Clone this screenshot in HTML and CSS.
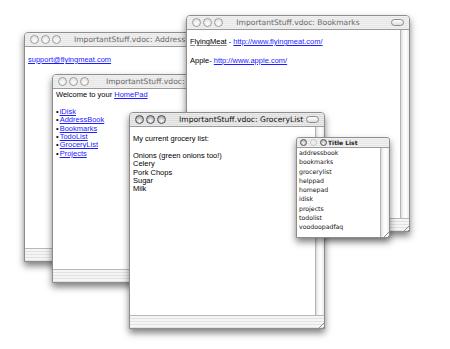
FILE: index.html
```html
<!DOCTYPE html>
<html lang="en">
<head>
  <meta charset="UTF-8">
  <title>VoodooPad windows</title>
  <link rel="stylesheet" href="styles.css">
</head>
<body>

  <div class="desktop">

    <!-- AddressBook page -->
    <div class="window win-addr">
      <div class="titlebar">
        <div class="lights"><span class="light"></span><span class="light"></span><span class="light"></span></div>
        <div class="title">ImportantStuff.vdoc: AddressBook</div>
        <div class="bar-end"></div>
      </div>
      <div class="pane">
        <div class="doc doc-addr">
          <a href="#">support@flyingmeat.com</a>
        </div>
        <div class="scroller"></div>
      </div>
      <div class="statusbar"><span class="grip"></span></div>
    </div>

    <!-- HomePad page -->
    <div class="window win-home">
      <div class="titlebar">
        <div class="lights"><span class="light"></span><span class="light"></span><span class="light"></span></div>
        <div class="title">ImportantStuff.vdoc: HomePad</div>
        <div class="bar-end"></div>
      </div>
      <div class="pane">
        <div class="doc doc-home">
          <p>Welcome to your <a href="#">HomePad</a></p>
          <ul class="pages">
            <li><a href="#">iDisk</a></li>
            <li><a href="#">AddressBook</a></li>
            <li><a href="#">Bookmarks</a></li>
            <li><a href="#">TodoList</a></li>
            <li><a href="#">GroceryList</a></li>
            <li><a href="#">Projects</a></li>
          </ul>
        </div>
        <div class="scroller"></div>
      </div>
      <div class="statusbar"><span class="grip"></span></div>
    </div>

    <!-- Bookmarks page -->
    <div class="window win-bookmarks">
      <div class="titlebar">
        <div class="lights"><span class="light"></span><span class="light"></span><span class="light"></span></div>
        <div class="title">ImportantStuff.vdoc: Bookmarks</div>
        <div class="bar-end"><span class="pill"></span></div>
      </div>
      <div class="pane">
        <div class="doc doc-bookmarks">
          <p><a class="wiki" href="#">FlyingMeat</a> - <a href="#">http://www.flyingmeat.com/</a></p>
          <p>Apple- <a href="#">http://www.apple.com/</a></p>
        </div>
        <div class="scroller"></div>
      </div>
      <div class="statusbar"><span class="grip"></span></div>
    </div>

    <!-- GroceryList page (key window) -->
    <div class="window win-grocery active">
      <div class="titlebar">
        <div class="lights"><span class="light"></span><span class="light"></span><span class="light"></span></div>
        <div class="title">ImportantStuff.vdoc: GroceryList</div>
        <div class="bar-end"><span class="pill"></span></div>
      </div>
      <div class="pane">
        <div class="doc doc-grocery">
          <p>My current grocery list:</p>
          <p>Onions (green onions too!)<br>Celery<br>Pork Chops<br>Sugar<br>Milk</p>
        </div>
        <div class="scroller"></div>
      </div>
      <div class="statusbar"><span class="grip"></span></div>
    </div>

    <!-- Title List panel -->
    <div class="window panel win-titles">
      <div class="titlebar">
        <div class="lights"><span class="light"></span><span class="light dim"></span><span class="light"></span></div>
        <div class="title">Title List</div>
      </div>
      <div class="pane">
        <ul class="title-list">
          <li>addressbook</li>
          <li>bookmarks</li>
          <li>grocerylist</li>
          <li>helppad</li>
          <li>homepad</li>
          <li>idisk</li>
          <li>projects</li>
          <li>todolist</li>
          <li>voodoopadfaq</li>
        </ul>
        <div class="scroller"><span class="grip"></span></div>
      </div>
    </div>

  </div>

</body>
</html>
```

FILE: styles.css
```css
body {
  margin: 0;
  background-color: #fff;
  font-family: "Liberation Sans", Arial, sans-serif;
}
.desktop {
  position: relative;
  width: 450px;
  height: 349px;
  overflow: hidden;
}

/* window frame */
.window {
  position: absolute;
  display: flex;
  flex-direction: column;
  background-color: #fff;
  border: 1px solid #8d8d8d;
  border-radius: 4px 4px 0 0;
  box-shadow: 0 4px 7px rgba(0, 0, 0, 0.5);
}
.win-addr {
  left: 24px;
  top: 32px;
  width: 228px;
  height: 228px;
}
.win-home {
  left: 52px;
  top: 74px;
  width: 223px;
  height: 207px;
}
.win-bookmarks {
  left: 186px;
  top: 15px;
  width: 222px;
  height: 215px;
}
.win-grocery {
  left: 129px;
  top: 112px;
  width: 194px;
  height: 215px;
}
.win-titles {
  left: 296px;
  top: 137px;
  width: 92px;
  height: 99px;
  border-radius: 3px 3px 0 0;
}

/* title bar */
.titlebar {
  display: grid;
  grid-template-columns: 1fr auto 1fr;
  align-items: center;
  height: 13px;
  border-bottom: 1px solid #9a9a9a;
  border-radius: 3px 3px 0 0;
  background: repeating-linear-gradient(#f1f1f1 0 1px, #e6e6e6 1px 2px);
}
.lights {
  display: flex;
  gap: 2px;
  padding-left: 5px;
}
.light {
  width: 7px;
  height: 7px;
  border: 1px solid #9c9c9c;
  border-radius: 50%;
  background: radial-gradient(circle at 50% 70%, #fdfdfd, #dcdcdc);
}
.title {
  font-family: "DejaVu Sans", sans-serif;
  font-size: 7.6px;
  color: #6b6b6b;
  white-space: nowrap;
}
.bar-end {
  display: flex;
  justify-content: flex-end;
  padding-right: 5px;
}
.pill {
  width: 11px;
  height: 5px;
  border: 1px solid #8a8a8a;
  border-radius: 4px;
  background: linear-gradient(#fff, #dedede);
}
.active .titlebar {
  grid-template-columns: auto 1fr auto;
  background: repeating-linear-gradient(#ececec 0 1px, #dcdcdc 1px 2px);
}
.active .light {
  border-color: #505050;
  background: radial-gradient(circle at 50% 70%, #f2f3f6 10%, #9599a2 90%);
}
.active .title {
  color: #111;
  padding-left: 13px;
  overflow: hidden;
}
.active .bar-end {
  padding-left: 2px;
}

/* content */
.pane {
  display: flex;
  flex: 1;
  min-height: 0;
}
.doc {
  flex: 1;
  padding: 0 3px;
  font-size: 7.5px;
  line-height: 8.4px;
  color: #000;
  overflow: hidden;
}
.doc p {
  margin: 0 0 8.4px;
}
.doc a {
  color: #1d1dff;
}
.doc-addr {
  padding-top: 9px;
}
.doc-home {
  padding-top: 2px;
}
.doc-grocery {
  padding-top: 8px;
}
.doc-bookmarks {
  padding-top: 7px;
  line-height: 9.3px;
}
.doc-bookmarks p {
  margin-bottom: 9.3px;
}
.doc a.wiki {
  color: #000;
  text-decoration-color: #888;
}
.pages {
  list-style: none;
  margin: 0;
  padding: 0;
}
.pages li::before {
  content: "\2022";
  margin-right: 1px;
}
.scroller {
  display: flex;
  align-items: flex-end;
  justify-content: flex-end;
  width: 8px;
  border-left: 1px solid #b4b4b4;
  background: linear-gradient(to right, #dcdcdc, #f6f6f6 30%, #fff 60%, #e9e9e9);
}

/* bottom strip */
.statusbar {
  display: flex;
  justify-content: flex-end;
  align-items: flex-end;
  height: 12px;
  border-top: 1px solid #b8b8b8;
  background: repeating-linear-gradient(#f5f5f5 0 2px, #e2e2e2 2px 3px);
}
.grip {
  width: 8px;
  height: 8px;
  background: repeating-linear-gradient(135deg, transparent 0 1.5px, #8c8c8c 1.5px 2.3px, transparent 2.3px 3px);
  clip-path: polygon(100% 0, 100% 100%, 0 100%);
}

/* Title List panel */
.panel .titlebar {
  grid-template-columns: auto 1fr;
  height: 9px;
}
.panel .lights {
  gap: 3px;
  padding-left: 3px;
}
.panel .light {
  width: 5px;
  height: 5px;
  border-color: #555;
  background: radial-gradient(circle at 50% 70%, #f4f4f4, #a8a8a8);
}
.panel .light.dim {
  border-color: #c4c4c4;
  background: #eee;
}
.panel .title {
  font-size: 6px;
  font-weight: bold;
  color: #222;
  padding-left: 1px;
}
.title-list {
  flex: 1;
  list-style: none;
  margin: 0;
  padding: 0 2px;
  font-family: "DejaVu Sans", sans-serif;
  font-size: 6.2px;
  line-height: 9.3px;
  color: #111;
}
.panel .scroller {
  width: 8px;
}
```
